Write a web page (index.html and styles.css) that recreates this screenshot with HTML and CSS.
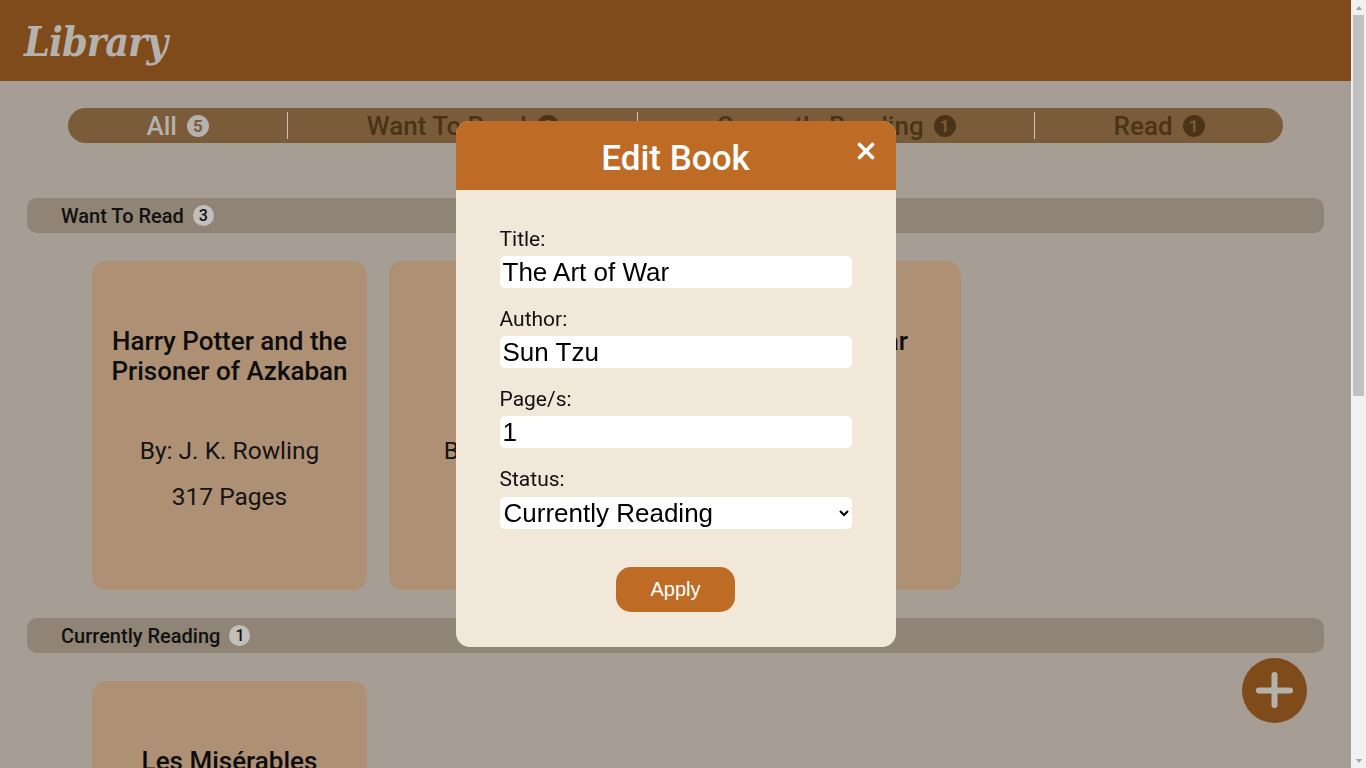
FILE: index.html
```html
<!DOCTYPE html>
<html lang="en">
<head>
<meta charset="utf-8">
<title>Library</title>
<link rel="stylesheet" href="styles.css">
</head>
<body>
<div class="viewport">
  <header class="topbar">
    <h1 class="logo">Library</h1>
  </header>

  <nav class="tabs">
    <button class="tab active">All <span class="count">5</span></button>
    <button class="tab">Want To Read <span class="count">3</span></button>
    <button class="tab">Currently Reading <span class="count">1</span></button>
    <button class="tab">Read <span class="count">1</span></button>
  </nav>

  <main class="shelves">
    <section class="shelf">
      <h2 class="shelf-head">Want To Read <span class="badge">3</span></h2>
      <div class="cards">
        <article class="card">
          <h3 class="card-title">Harry Potter and the Prisoner of Azkaban</h3>
          <p class="card-author">By: J. K. Rowling</p>
          <p class="card-pages">317 Pages</p>
        </article>
        <article class="card">
          <h3 class="card-title">Dr. No</h3>
          <p class="card-author">By: Ian Fleming</p>
          <p class="card-pages">256 Pages</p>
        </article>
        <article class="card">
          <h3 class="card-title">The Art of War</h3>
          <p class="card-author">By: Sun Tzu</p>
          <p class="card-pages">1 Pages</p>
        </article>
      </div>
    </section>

    <section class="shelf">
      <h2 class="shelf-head">Currently Reading <span class="badge">1</span></h2>
      <div class="cards">
        <article class="card">
          <h3 class="card-title">Les Misérables</h3>
          <p class="card-author">By: Victor Hugo</p>
          <p class="card-pages">1463 Pages</p>
        </article>
      </div>
    </section>

    <section class="shelf">
      <h2 class="shelf-head">Read <span class="badge">1</span></h2>
      <div class="cards">
        <article class="card">
          <h3 class="card-title">The Hobbit</h3>
          <p class="card-author">By: J. R. R. Tolkien</p>
          <p class="card-pages">310 Pages</p>
        </article>
      </div>
    </section>
  </main>
</div>

<aside class="scrollbar" aria-hidden="true">
  <span class="sb-btn sb-up"></span>
  <span class="sb-track"><span class="sb-thumb"></span></span>
  <span class="sb-btn sb-down"></span>
</aside>

<button class="fab" aria-label="Add book">
  <svg viewBox="0 0 65 65" width="65" height="65">
    <path d="M32.5 17v30M17 32.5h31" stroke="#b5b1ac" stroke-width="6" stroke-linecap="round" fill="none"/>
  </svg>
</button>

<div class="backdrop">
  <div class="modal">
    <div class="modal-head">
      <h2 class="modal-title">Edit Book</h2>
      <button class="modal-close" aria-label="Close">
        <svg viewBox="0 0 18 18" width="18" height="18">
          <path d="M2.5 2.5l13 13M15.5 2.5l-13 13" stroke="#fff" stroke-width="3.6" stroke-linecap="round" fill="none"/>
        </svg>
      </button>
    </div>
    <form class="modal-body">
      <div class="field">
        <label class="field-label" for="title">Title:</label>
        <input class="field-input" id="title" type="text" value="The Art of War">
      </div>
      <div class="field">
        <label class="field-label" for="author">Author:</label>
        <input class="field-input" id="author" type="text" value="Sun Tzu">
      </div>
      <div class="field">
        <label class="field-label" for="pages">Page/s:</label>
        <input class="field-input" id="pages" type="text" value="1">
      </div>
      <div class="field">
        <label class="field-label" for="status">Status:</label>
        <select class="field-input field-select" id="status">
          <option>Want To Read</option>
          <option selected>Currently Reading</option>
          <option>Read</option>
        </select>
      </div>
      <button class="apply" type="button">Apply</button>
    </form>
  </div>
</div>
</body>
</html>
```

FILE: styles.css
```css
* { box-sizing: border-box; }

html, body {
  margin: 0;
  padding: 0;
  height: 100%;
  overflow: hidden;
}

body {
  display: flex;
  background: #a69e94;
  font-family: Roboto, "Liberation Sans", sans-serif;
  color: #111;
}

.viewport {
  flex: 1 1 auto;
  min-width: 0;
  height: 100%;
  overflow-y: auto;
  scrollbar-width: none;
}

/* fake classic scrollbar */
.scrollbar {
  flex: none;
  width: 15px;
  height: 100%;
  display: flex;
  flex-direction: column;
  background: #f1f1f1;
}

.sb-btn {
  flex: none;
  height: 15px;
  display: flex;
  justify-content: center;
}

.sb-up {
  align-items: flex-start;
  padding-top: 6px;
}

.sb-up::before {
  content: "";
  width: 0;
  height: 0;
  border-left: 3.5px solid transparent;
  border-right: 3.5px solid transparent;
  border-bottom: 4px solid #a3a3a3;
}

.sb-down {
  align-items: flex-end;
  padding-bottom: 5px;
}

.sb-down::before {
  content: "";
  width: 0;
  height: 0;
  border-left: 3.5px solid transparent;
  border-right: 3.5px solid transparent;
  border-top: 4px solid #a3a3a3;
}

.sb-track {
  flex: 1 1 auto;
  display: flex;
  flex-direction: column;
  padding: 0 2px;
}

.sb-thumb {
  height: 381px;
  background: #c1c1c1;
}

.topbar {
  height: 81px;
  background: #7f4b1b;
  display: flex;
  align-items: center;
  padding-left: 24px;
}

.logo {
  margin: 0;
  padding-top: 4px;
  font-family: "DejaVu Serif", serif;
  font-stretch: condensed;
  font-style: italic;
  font-weight: 700;
  font-size: 41px;
  letter-spacing: -1px;
  color: #b5b1ac;
  line-height: 1;
}

.tabs {
  display: flex;
  align-items: center;
  margin: 27px 68px 0;
  height: 35px;
  padding: 4px 0;
  background: #7a5c3b;
  border-radius: 18px;
}

.tab {
  flex: 1 1 auto;
  height: 27px;
  display: flex;
  align-items: center;
  justify-content: center;
  gap: 10px;
  background: none;
  border: none;
  padding: 0;
  font-family: Roboto, sans-serif;
  font-weight: 500;
  font-size: 26px;
  color: #4b3317;
}

.tab + .tab {
  border-left: 1px solid #c9c3bb;
}

.tab.active {
  color: #b5b1ac;
}

.count {
  width: 22px;
  height: 22px;
  border-radius: 50%;
  display: inline-flex;
  align-items: center;
  justify-content: center;
  font-size: 17px;
  font-weight: 700;
  color: #7a5c3b;
  background: #4b3317;
}

.tab.active .count {
  background: #b5b1ac;
}

.shelves {
  padding: 55px 27px 25px;
}

.shelf-head {
  margin: 0;
  height: 35px;
  display: flex;
  align-items: center;
  gap: 9px;
  padding-left: 34px;
  background: #8f8475;
  border-radius: 10px;
  font-size: 20px;
  font-weight: 500;
  color: #111;
}

.badge {
  width: 21px;
  height: 21px;
  border-radius: 50%;
  background: #c2beb9;
  display: inline-flex;
  align-items: center;
  justify-content: center;
  font-size: 16px;
  font-weight: 500;
  color: #111;
}

.cards {
  display: flex;
  gap: 22px;
  padding: 28px 0 28px 65px;
}

.card {
  width: 275px;
  height: 329px;
  flex: none;
  border-radius: 14px;
  background: #ae9074;
  padding: 65px 16px 0;
  text-align: center;
}

.card-title {
  margin: 0;
  min-height: 60px;
  font-size: 26px;
  line-height: 30px;
  font-weight: 500;
  color: #0d0d0d;
}

.card-author {
  margin: 52px 0 0;
  font-size: 24.5px;
  line-height: 26px;
  color: #141414;
}

.card-pages {
  margin: 20px 0 0;
  font-size: 24.5px;
  line-height: 26px;
  color: #141414;
}

.fab {
  position: fixed;
  right: 59px;
  bottom: 45px;
  width: 65px;
  height: 65px;
  border-radius: 50%;
  border: none;
  padding: 0;
  background: #7f4b1b;
  display: flex;
  align-items: center;
  justify-content: center;
}

.fab svg { display: block; }

.backdrop {
  position: fixed;
  top: 0;
  bottom: 0;
  left: 0;
  right: 15px;
  display: flex;
  align-items: center;
  justify-content: center;
}

.modal {
  width: 440px;
  border-radius: 14px;
  overflow: hidden;
  background: #f2e8da;
}

.modal-head {
  position: relative;
  height: 69px;
  background: #be6c25;
  display: flex;
  align-items: center;
  justify-content: center;
  padding-top: 6px;
}

.modal-title {
  margin: 0;
  font-size: 35px;
  font-weight: 500;
  color: #fff;
}

.modal-close {
  position: absolute;
  top: 21px;
  right: 21px;
  width: 18px;
  height: 18px;
  padding: 0;
  border: none;
  background: none;
}

.modal-close svg { display: block; }

.modal-body {
  display: flex;
  flex-direction: column;
  gap: 20px;
  padding: 38px 44px 35px;
}

.field {
  display: flex;
  flex-direction: column;
  gap: 5px;
}

.field-label {
  font-size: 21px;
  line-height: 23px;
  color: #111;
}

.field-input {
  width: 100%;
  height: 32px;
  border: none;
  border-radius: 5px;
  background: #fff;
  padding: 0 3px;
  font-family: "Liberation Sans", Arial, sans-serif;
  font-size: 26px;
  color: #000;
}

.field-select {
  padding: 0;
  margin-top: 1px;
}

.apply {
  align-self: center;
  margin-top: 18px;
  width: 119px;
  height: 45px;
  border: none;
  border-radius: 15px;
  background: #be6c25;
  color: #fff;
  font-family: "Liberation Sans", Arial, sans-serif;
  font-size: 20px;
  padding: 0;
}
```
